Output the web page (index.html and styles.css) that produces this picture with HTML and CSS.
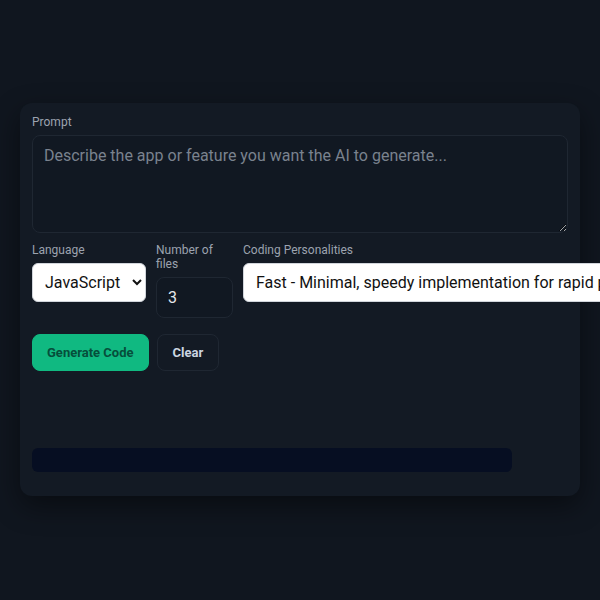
FILE: index.html
```html
<!DOCTYPE html>
<html lang="en">
<head>
<meta charset="utf-8">
<title>Code Generator</title>
<link rel="stylesheet" href="styles.css">
</head>
<body>
<main class="page">
  <section class="card">
    <label class="label" for="prompt">Prompt</label>
    <textarea id="prompt" class="prompt" placeholder="Describe the app or feature you want the AI to generate..."></textarea>
    <div class="row">
      <div class="field field-lang">
        <label class="label" for="lang">Language</label>
        <select id="lang" class="select select-lang">
          <option>JavaScript</option>
          <option>Python</option>
          <option>TypeScript</option>
        </select>
      </div>
      <div class="field field-num">
        <label class="label" for="num">Number of files</label>
        <input id="num" class="num" type="text" value="3">
      </div>
      <div class="field field-pers">
        <label class="label" for="pers">Coding Personalities</label>
        <select id="pers" class="select select-pers">
          <option>Fast - Minimal, speedy implementation for rapid prototyping</option>
        </select>
      </div>
    </div>
    <div class="actions">
      <button class="btn btn-primary" type="button">Generate Code</button>
      <button class="btn btn-ghost" type="button">Clear</button>
    </div>
    <div class="output"></div>
    <div class="progress"></div>
  </section>
</main>
</body>
</html>
```

FILE: styles.css
```css
html, body {
  margin: 0;
  padding: 0;
  overflow: hidden;
}
body {
  background: #10161f;
  font-family: Roboto, "Liberation Sans", Arial, sans-serif;
  color: #e5e7eb;
}
.page {
  box-sizing: border-box;
  width: 600px;
  height: 600px;
  padding: 103px 20px 0;
}
.card {
  box-sizing: border-box;
  width: 560px;
  height: 393px;
  padding: 12px;
  background: #131a24;
  border-radius: 12px;
  box-shadow: 0 10px 28px rgba(0, 0, 0, 0.45);
  display: flex;
  flex-direction: column;
}
.label {
  display: block;
  font-size: 12px;
  line-height: 14px;
  color: #9ca3af;
  margin-bottom: 6px;
}
.prompt {
  display: block;
  box-sizing: border-box;
  width: 536px;
  height: 98px;
  margin: 0 0 10px;
  padding: 10px 11px;
  background: #111822;
  border: 1px solid #1f2732;
  border-radius: 8px;
  color: #e5e7eb;
  font-family: inherit;
  font-size: 16px;
  line-height: 20px;
  resize: vertical;
  outline: none;
}
.prompt::placeholder {
  color: #7a828e;
}
.row {
  display: flex;
  gap: 10px;
  align-items: flex-start;
}
.field {
  display: flex;
  flex-direction: column;
  flex-shrink: 0;
}
.field-lang { width: 114px; }
.field-num { width: 77px; }
.field-pers { width: 420px; }
.select {
  box-sizing: border-box;
  height: 39px;
  padding: 0 4px 0 8px;
  background: #ffffff;
  color: #111111;
  border: 1px solid #d1d5db;
  border-radius: 6px;
  font-family: inherit;
  font-size: 16px;
}
.select-lang { width: 114px; }
.select-pers { width: 420px; }
.num {
  box-sizing: border-box;
  width: 77px;
  height: 41px;
  padding: 0 11px;
  background: #111822;
  border: 1px solid #1f2732;
  border-radius: 8px;
  color: #e5e7eb;
  font-family: inherit;
  font-size: 16px;
  outline: none;
}
.actions {
  display: flex;
  gap: 8px;
  margin-top: 16px;
}
.btn {
  box-sizing: border-box;
  height: 37px;
  border-radius: 8px;
  font-family: inherit;
  font-size: 13px;
  font-weight: 700;
  cursor: pointer;
}
.btn-primary {
  padding: 0 14px;
  background: #10b981;
  color: #064e3b;
  border: 1px solid #10b981;
}
.btn-ghost {
  padding: 0 15px;
  background: transparent;
  color: #cbd5e1;
  border: 1px solid #1f2732;
}
.output {
  height: 77px;
}
.progress {
  width: 480px;
  height: 24px;
  background: #060e22;
  border-radius: 6px;
}
```
